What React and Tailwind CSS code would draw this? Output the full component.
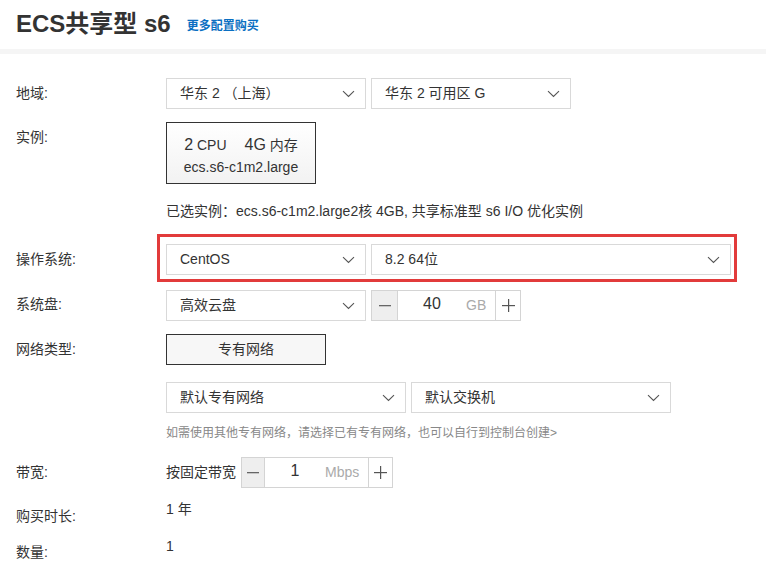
import React from "react";

const font = { fontFamily: '"Liberation Sans", "Noto Sans CJK SC", sans-serif' };

const Chevron = () => (
  <svg width="13" height="8" viewBox="0 0 13 8" fill="none">
    <path d="M1 1.2 L6.5 6.5 L12 1.2" stroke="#555" strokeWidth="1.1" />
  </svg>
);

const Select = ({ label, w }) => (
  <div
    className={`h-[31px] ${w} border border-[#d9d9d9] bg-white flex items-center justify-between pl-[13px] pr-[10px] text-[14px] text-[#333]`}
  >
    <span>{label}</span>
    <Chevron />
  </div>
);

const Stepper = ({ value, unit, minusW, inputW, plusW, valueW }) => (
  <div className="h-[31px] flex border border-[#d4d4d4] text-[#333]">
    <div className={`${minusW} bg-[#eeeeee] border-r border-[#d4d4d4] flex items-center justify-center`}>
      <svg width="12" height="2" viewBox="0 0 12 2">
        <rect width="12" height="1.3" fill="#666" />
      </svg>
    </div>
    <div className={`${inputW} flex items-center bg-white`}>
      <span className={`${valueW} text-center text-[16px] -mt-[4px]`}>{value}</span>
      <span className="text-[14px] text-[#aaa]">{unit}</span>
    </div>
    <div className={`${plusW} border-l border-[#d4d4d4] flex items-center justify-center`}>
      <svg width="13" height="13" viewBox="0 0 13 13">
        <rect x="0" y="6" width="13" height="1.2" fill="#555" />
        <rect x="6" y="0" width="1.2" height="13" fill="#555" />
      </svg>
    </div>
  </div>
);

const Label = ({ children, pt = "pt-[7px]" }) => (
  <div className={`w-[150px] shrink-0 text-[14px] leading-[16px] text-[#333] ${pt}`}>{children}</div>
);

export default function App() {
  return (
    <div className="w-[766px] h-[583px] bg-white overflow-hidden" style={font}>
      <div className="h-[49px] flex items-end pl-[16px] pb-[11px]">
        <h1 className="text-[24px] leading-[29px] font-bold text-[#333]">ECS共享型 s6</h1>
        <a className="ml-[16px] mb-[3px] text-[12px] font-bold text-[#0a6fc2]">更多配置购买</a>
      </div>
      <div className="h-[5px] bg-[#f5f5f5]" />

      <div className="pl-[16px] pt-[24px]">
        <div className="flex">
          <Label>地域:</Label>
          <div className="flex gap-[5px]">
            <Select label="华东 2 （上海）" w="w-[200px]" />
            <Select label="华东 2 可用区 G" w="w-[200px]" />
          </div>
        </div>

        <div className="flex mt-[13px]">
          <Label>实例:</Label>
          <div className="w-[150px] h-[62px] border border-[#333] bg-gradient-to-b from-white to-[#f2f2f2] flex flex-col items-center justify-center pt-[5px] text-[#333]">
            <div className="leading-[20px]">
              <span className="text-[16px]">2</span>
              <span className="text-[14px]"> CPU</span>
              <span className="text-[16px] ml-[18px]">4G</span>
              <span className="text-[14px]"> 内存</span>
            </div>
            <div className="text-[14px] leading-[18px] mt-[3px]">ecs.s6-c1m2.large</div>
          </div>
        </div>

        <div className="flex mt-[19px]">
          <Label pt="pt-0" />
          <div className="text-[14px] leading-[16px] text-[#333]">
            已选实例：ecs.s6-c1m2.large2核 4GB, 共享标准型 s6 I/O 优化实例
          </div>
        </div>

        <div className="flex mt-[15px]">
          <div className="w-[141px] shrink-0 pt-[17px] text-[14px] leading-[16px] text-[#333]">操作系统:</div>
          <div className="w-[580px] border-[3px] border-[#e23b3b] pl-[6px] pr-[3px] pt-[7px] pb-[4px] flex gap-[5px]">
            <Select label="CentOS" w="w-[200px]" />
            <Select label="8.2 64位" w="w-[360px]" />
          </div>
        </div>

        <div className="flex mt-[8px]">
          <Label pt="pt-[6px]">系统盘:</Label>
          <div className="flex gap-[5px]">
            <Select label="高效云盘" w="w-[200px]" />
            <Stepper value="40" unit="GB" minusW="w-[26px]" inputW="w-[97px]" plusW="w-[25px]" valueW="w-[68px]" />
          </div>
        </div>

        <div className="flex mt-[13px]">
          <Label>网络类型:</Label>
          <div className="w-[160px] h-[31px] border border-[#333] bg-[#f7f7f7] flex items-center justify-center text-[14px] text-[#333]">
            专有网络
          </div>
        </div>

        <div className="flex mt-[17px]">
          <Label pt="pt-0" />
          <div className="flex gap-[5px]">
            <Select label="默认专有网络" w="w-[240px]" />
            <Select label="默认交换机" w="w-[260px]" />
          </div>
        </div>

        <div className="flex mt-[12px]">
          <Label pt="pt-0" />
          <div className="text-[12px] leading-[16px] text-[#888]">
            如需使用其他专有网络，请选择已有专有网络，也可以自行到控制台创建&gt;
          </div>
        </div>

        <div className="flex mt-[16px]">
          <Label>带宽:</Label>
          <div className="flex items-center">
            <span className="text-[14px] text-[#333] mr-[5px]">按固定带宽</span>
            <Stepper value="1" unit="Mbps" minusW="w-[23px]" inputW="w-[103px]" plusW="w-[24px]" valueW="w-[60px]" />
          </div>
        </div>

        <div className="flex mt-[13px]">
          <Label pt="pt-[7px]">购买时长:</Label>
          <div className="text-[14px] leading-[16px] text-[#333]">1 年</div>
        </div>

        <div className="flex mt-[6px]">
          <Label pt="pt-[14px]">数量:</Label>
          <div className="text-[14px] leading-[16px] text-[#333] pt-[8px]">1</div>
        </div>
      </div>
    </div>
  );
}
